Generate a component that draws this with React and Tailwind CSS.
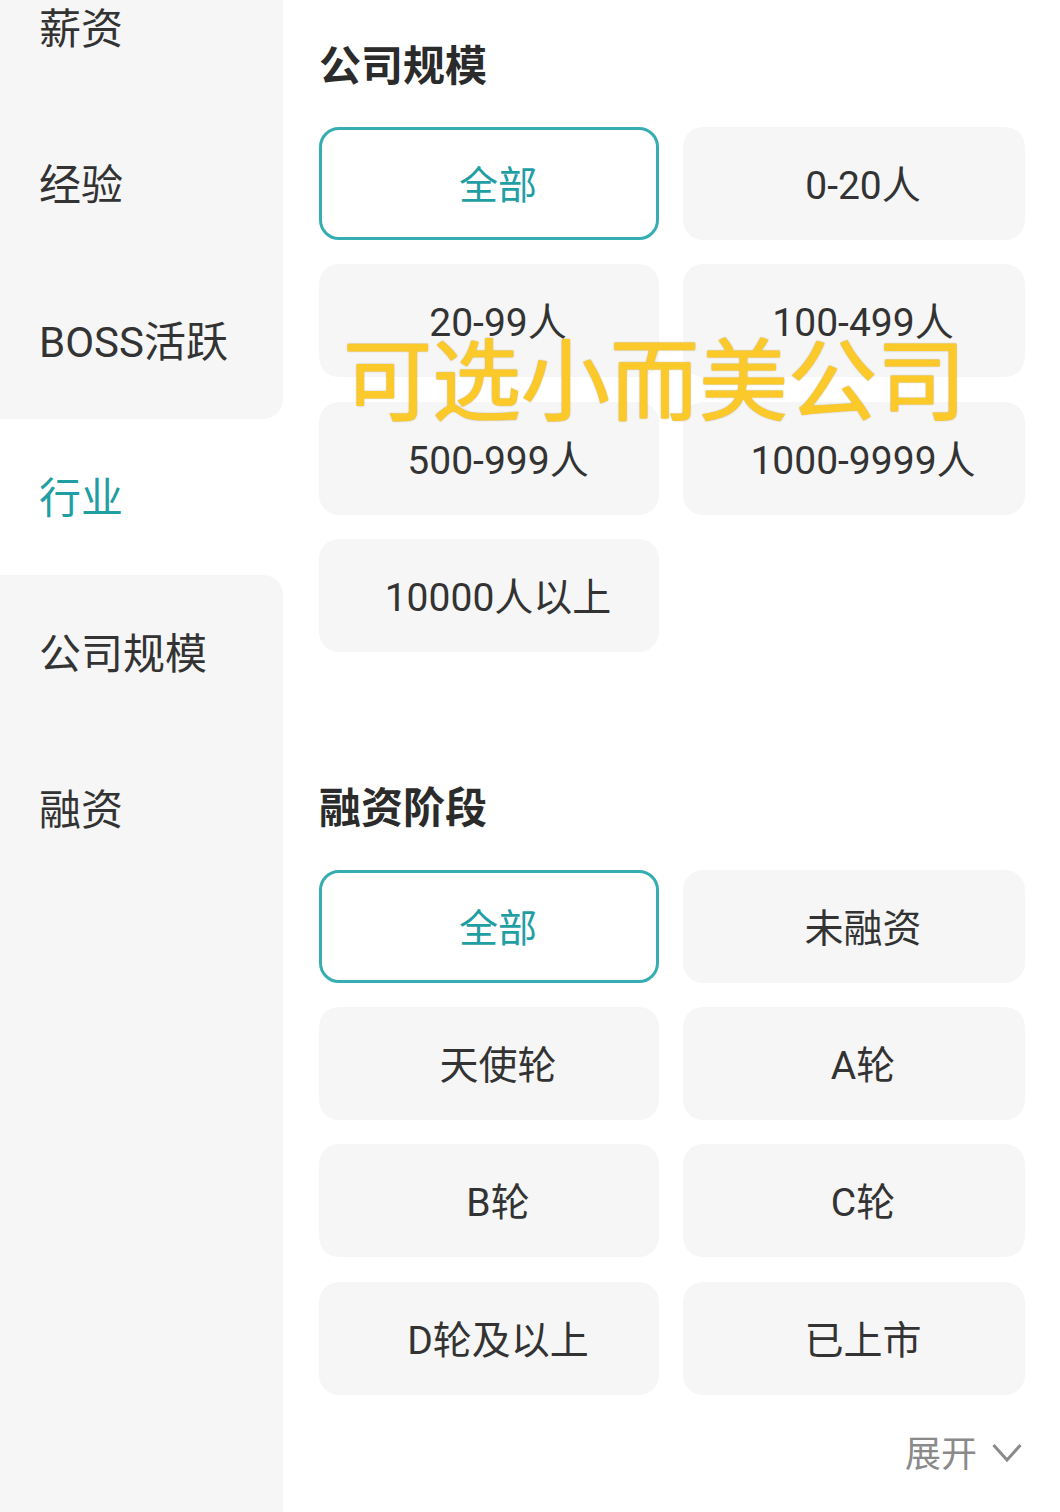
const FONT = "font-['Roboto','Noto_Sans_CJK_SC',sans-serif]";

function Tile({ label, active }) {
  return (
    <div
      className={
        active
          ? "flex h-[113px] items-center justify-center rounded-[20px] border-[3px] border-[#35adb2] bg-white pl-[18px] pt-[6px] text-[39px] leading-none text-[#1f9ea3]"
          : "flex h-[113px] items-center justify-center rounded-[20px] bg-[#f6f6f6] pl-[18px] pt-[6px] text-[39px] leading-none text-[#333333]"
      }
    >
      {label}
    </div>
  );
}

function Section({ title, items, className, gridClass }) {
  return (
    <section className={className}>
      <h2 className="flex h-[58px] items-center text-[42px] font-bold leading-none text-[#2b2b2b]">{title}</h2>
      <div className={`grid grid-cols-[340px_342px] gap-x-[24px] gap-y-[24.3px] ${gridClass}`}>
        {items.map((t, i) => (
          <Tile key={t} label={t} active={i === 0} />
        ))}
      </div>
    </section>
  );
}

function SideItem({ label, className = "" }) {
  return <div className={`flex h-[156px] items-center pl-[39px] pt-[4px] ${className}`}>{label}</div>;
}

export default function App() {
  return (
    <div className={`relative flex h-[1512px] w-[1060px] overflow-hidden bg-white ${FONT}`}>
      <aside className="flex h-full w-[283px] shrink-0 flex-col bg-white text-[42px] leading-none text-[#333333]">
        <div className="-mt-[50px] flex h-[469px] flex-col rounded-br-[20px] bg-[#f6f6f6]">
          <SideItem label="薪资" />
          <SideItem label="经验" />
          <SideItem label="BOSS活跃" className="h-[157px]" />
        </div>
        <SideItem label="行业" className="text-[#1f9ea3]" />
        <div className="flex flex-1 flex-col rounded-tr-[20px] bg-[#f6f6f6]">
          <SideItem label="公司规模" />
          <SideItem label="融资" />
        </div>
      </aside>

      <main className="flex-1 pl-[36px]">
        <Section
          className="pt-[38px]"
          gridClass="mt-[31px]"
          title="公司规模"
          items={["全部", "0-20人", "20-99人", "100-499人", "500-999人", "1000-9999人", "10000人以上"]}
        />
        <Section
          className="pt-[128px]"
          gridClass="mt-[32px]"
          title="融资阶段"
          items={["全部", "未融资", "天使轮", "A轮", "B轮", "C轮", "D轮及以上", "已上市"]}
        />
        <div className="mt-[42px] flex w-[706px] items-center justify-end text-[36px] leading-none text-[#8a8a8a]">
          <span>展开</span>
          <svg className="mb-[3px] ml-[15px] mr-[3px]" width="30" height="20" viewBox="0 0 30 20" fill="none">
            <path d="M1.5 2 L15 17 L28.5 2" stroke="#8a8a8a" strokeWidth="3" />
          </svg>
        </div>
      </main>

      <div className="absolute left-[343px] top-[335px] whitespace-nowrap text-[89px] leading-[96px] text-[#fcc92a] [-webkit-text-stroke:1px_#fcc92a] [text-shadow:0_0_2px_rgba(90,70,0,0.7)]">
        可选小而美公司
      </div>
    </div>
  );
}
